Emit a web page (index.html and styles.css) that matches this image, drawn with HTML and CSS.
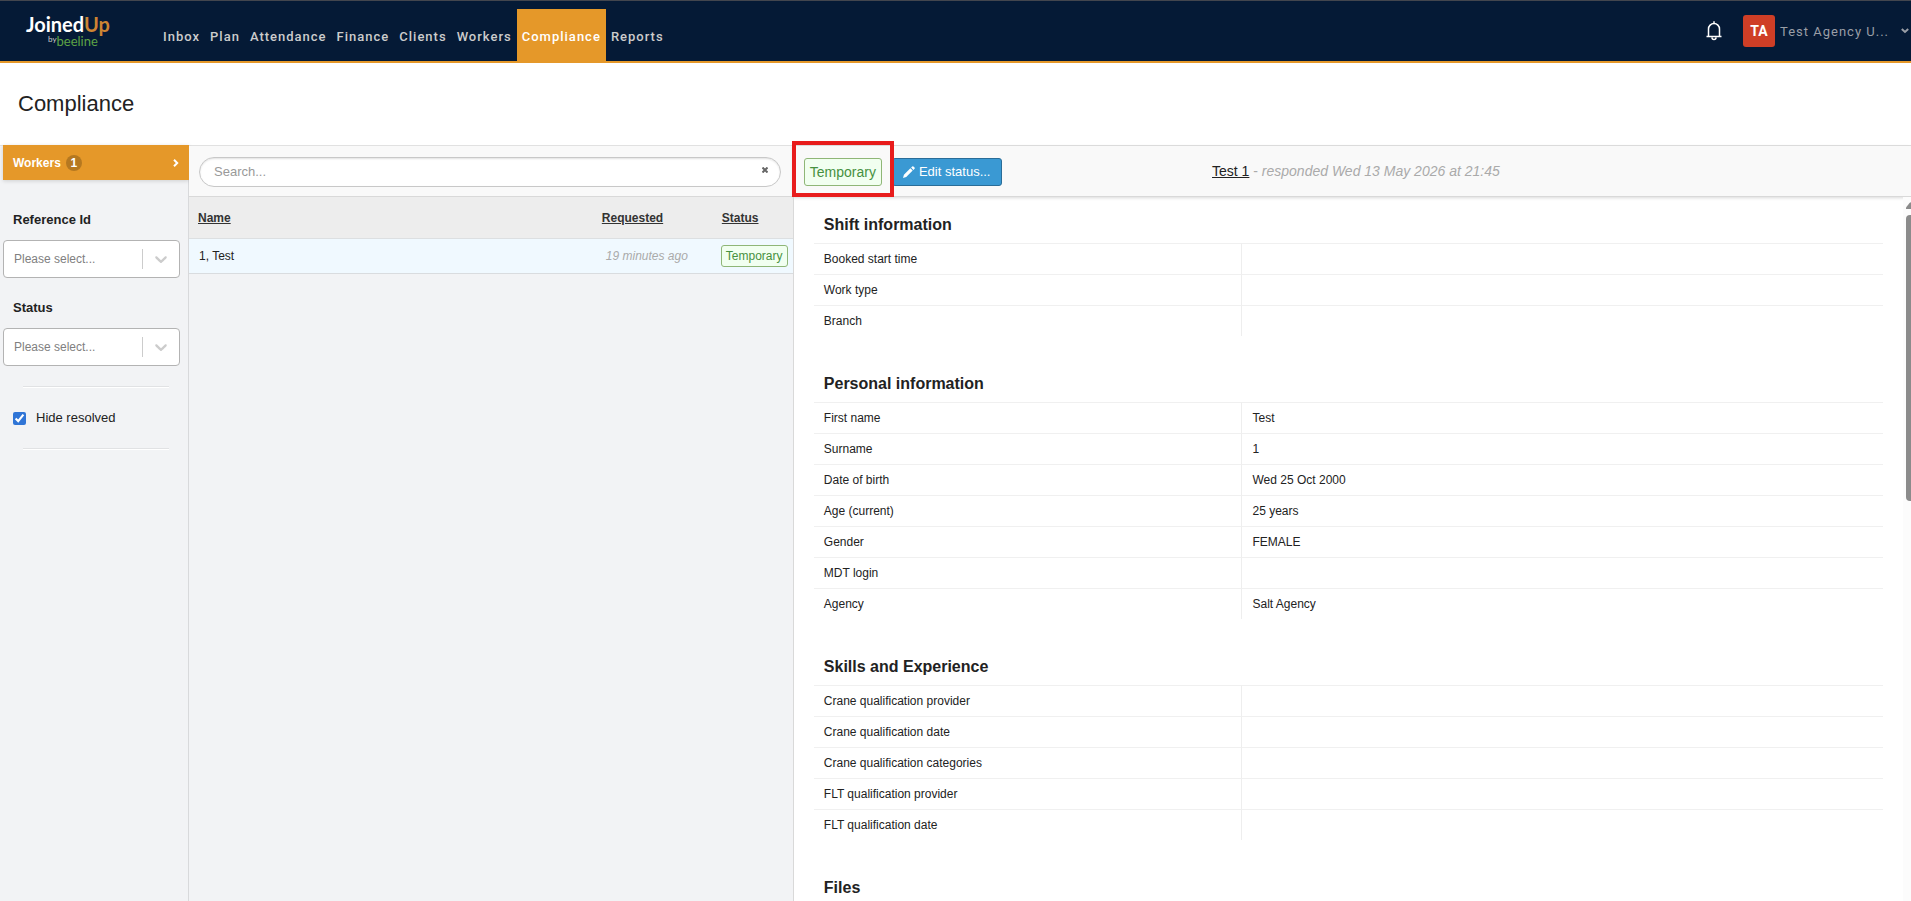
FILE: index.html
```html
<!DOCTYPE html>
<html lang="en">
<head>
    <meta charset="UTF-8">
    <meta name="viewport" content="width=device-width, initial-scale=1.0">
    <title>Compliance</title>
    <link rel="stylesheet" href="styles.css">
</head>
<body>

    <header class="top-bar">
        <a class="logo" href="#">
            <span class="logo-name">Joined<span class="logo-up">Up</span></span>
            <span class="logo-sub"><span class="logo-by">by</span><span class="logo-beeline">beeline</span></span>
        </a>
        <nav class="main-nav">
            <a href="#">Inbox</a>
            <a href="#">Plan</a>
            <a href="#">Attendance</a>
            <a href="#">Finance</a>
            <a href="#">Clients</a>
            <a href="#">Workers</a>
            <a href="#" class="active">Compliance</a>
            <a href="#">Reports</a>
        </nav>
        <div class="user-area">
            <button class="bell-button" aria-label="Notifications">
                <svg width="16" height="20" viewBox="0 0 16 20" fill="none" stroke="#fff" stroke-width="1.5">
                    <path d="M.5 15.5h15M2.5 15.5V8a5.5 5.5 0 0 1 11 0v7.500M8 2.500V.2M6 16.500a2 2 0 0 0 4 0"/>
                </svg>
            </button>
            <button class="user-menu">
                <span class="avatar">TA</span>
                <span class="user-name">Test Agency U...</span>
                <svg width="8" height="6" viewBox="0 0 8 6" fill="none" stroke="#9a9ea6" stroke-width="2"><path d="M.8 1l3.200 3L7.200 1"/></svg>
            </button>
        </div>
    </header>

    <h1 class="page-title">Compliance</h1>

    <main class="workspace">
        <aside class="sidebar">
            <a class="side-tab" href="#">
                Workers <span class="count">1</span>
                <svg class="side-arrow" width="6" height="8" viewBox="0 0 6 8" fill="none" stroke="#fff" stroke-width="2"><path d="M1 .8l3.200 3.200L1 7.200"/></svg>
            </a>

            <label class="filter-label" for="reference-id">Reference Id</label>
            <div class="select-box">
                <select id="reference-id"><option>Please select...</option></select>
                <svg width="20" height="20" viewBox="0 0 20 20" fill="#ccc"><path d="M4.516 7.548c.436-.446 1.043-.481 1.576 0L10 11.295l3.908-3.747c.533-.481 1.141-.446 1.574 0 .436.445.408 1.197 0 1.615-.406.418-4.695 4.502-4.695 4.502a1.095 1.095 0 0 1-1.576 0S4.924 9.581 4.516 9.163s-.436-1.170 0-1.615z"/></svg>
            </div>

            <label class="filter-label" for="status">Status</label>
            <div class="select-box">
                <select id="status"><option>Please select...</option></select>
                <svg width="20" height="20" viewBox="0 0 20 20" fill="#ccc"><path d="M4.516 7.548c.436-.446 1.043-.481 1.576 0L10 11.295l3.908-3.747c.533-.481 1.141-.446 1.574 0 .436.445.408 1.197 0 1.615-.406.418-4.695 4.502-4.695 4.502a1.095 1.095 0 0 1-1.576 0S4.924 9.581 4.516 9.163s-.436-1.170 0-1.615z"/></svg>
            </div>

            <hr>
            <label class="check-label"><input type="checkbox" checked> Hide resolved</label>
            <hr>
        </aside>

        <section class="list-panel">
            <div class="toolbar search-bar">
                <input class="search" type="text" placeholder="Search..." aria-label="Search">
                <button class="clear" aria-label="Clear search">
                    <svg width="6" height="6" viewBox="0 0 6 6" stroke="#666" stroke-width="2"><path d="M.5.5l5 5M5.500.5l-5 5"/></svg>
                </button>
            </div>
            <table class="worker-list">
                <thead>
                    <tr>
                        <th><a href="#">Name</a></th>
                        <th class="col-requested"><a href="#">Requested</a></th>
                        <th class="col-status"><a href="#">Status</a></th>
                    </tr>
                </thead>
                <tbody>
                    <tr>
                        <td>1, Test</td>
                        <td class="when">19 minutes ago</td>
                        <td class="status-cell"><span class="badge">Temporary</span></td>
                    </tr>
                </tbody>
            </table>
        </section>

        <section class="detail-panel">
            <div class="toolbar detail-bar">
                <div class="status-actions">
                    <div class="highlight"><span class="badge badge-large">Temporary</span></div>
                    <button class="edit-button">
                        <svg width="12" height="12" viewBox="0 0 13 13" fill="#fff"><path d="M0 13l1-3.500 7-7L10.500 5l-7 7zM8.800 1.700L10 .5a1 1 0 0 1 1.300 0l1.200 1.200a1 1 0 0 1 0 1.300l-1.200 1.200z"/></svg>
                        Edit status...
                    </button>
                </div>
                <div class="response"><a href="#">Test 1</a> - <em>responded Wed 13 May 2026 at 21:45</em></div>
            </div>

            <div class="details">
                <h2>Shift information</h2>
                <table class="info">
                    <tr><th>Booked start time</th><td></td></tr>
                    <tr><th>Work type</th><td></td></tr>
                    <tr><th>Branch</th><td></td></tr>
                </table>

                <h2>Personal information</h2>
                <table class="info">
                    <tr><th>First name</th><td>Test</td></tr>
                    <tr><th>Surname</th><td>1</td></tr>
                    <tr><th>Date of birth</th><td>Wed 25 Oct 2000</td></tr>
                    <tr><th>Age (current)</th><td>25 years</td></tr>
                    <tr><th>Gender</th><td>FEMALE</td></tr>
                    <tr><th>MDT login</th><td></td></tr>
                    <tr><th>Agency</th><td>Salt Agency</td></tr>
                </table>

                <h2>Skills and Experience</h2>
                <table class="info">
                    <tr><th>Crane qualification provider</th><td></td></tr>
                    <tr><th>Crane qualification date</th><td></td></tr>
                    <tr><th>Crane qualification categories</th><td></td></tr>
                    <tr><th>FLT qualification provider</th><td></td></tr>
                    <tr><th>FLT qualification date</th><td></td></tr>
                </table>

                <h2>Files</h2>
            </div>

            <!-- Scrollbar runs off the right edge of the panel -->
            <div class="scroll-track">
                <svg width="10" height="7" viewBox="0 0 10 7" fill="#8b8b8b"><path d="M0 7V5.500L3.500 1Q5-.5 6.500 1L10 5.500V7z"/></svg>
                <div class="scroll-thumb"></div>
            </div>
        </section>
    </main>

</body>
</html>
```
FILE: styles.css
```css
* {
    box-sizing: border-box;
}

body {
    margin: 0;
    height: 100vh;
    overflow: hidden;
    display: flex;
    flex-direction: column;
    font-family: Arial, "Liberation Sans", sans-serif;
    font-size: 12px;
    color: #222;
    background-color: #fff;
}

button,
input,
select {
    font-family: inherit;
    margin: 0;
}

button {
    cursor: pointer;
}

/* Top bar */
.top-bar {
    display: flex;
    flex: none;
    height: 63px;
    font-family: Roboto, Arial, sans-serif;
    background-color: #051a36;
    border-top: 1px solid #43464e;
    border-bottom: 2px solid #e59829;
}

.logo {
    display: flex;
    flex-direction: column;
    width: 158px;
    padding: 12px 0 0 26px;
    font-family: Lato, sans-serif;
    text-decoration: none;
}

.logo-name {
    font-size: 20px;
    font-weight: bold;
    line-height: 22px;
    color: #fff;
}

.logo-up {
    color: #cd8433;
}

.logo-sub {
    display: flex;
    padding-left: 22px;
    line-height: 12px;
}

.logo-by {
    font-size: 8px;
    line-height: 8px;
    color: #ccc;
}

.logo-beeline {
    font-size: 13px;
    color: #5da345;
}

.main-nav {
    display: flex;
    padding-top: 8px;
}

.main-nav a {
    padding: 19px 5px 15px;
    font-size: 13px;
    font-weight: 500;
    line-height: 18px;
    letter-spacing: 1px;
    color: #ccc;
    text-decoration: none;
}

.main-nav a.active {
    color: #fff;
    background-color: #e59829;
}

.user-area {
    display: flex;
    align-items: center;
    margin-left: auto;
    padding-right: 2px;
}

.bell-button,
.user-menu,
.clear {
    display: flex;
    align-items: center;
    padding: 0;
    border: none;
    background: none;
}

.bell-button {
    margin-right: 21px;
}

.user-menu {
    font-size: 13px;
    letter-spacing: 1px;
    color: #9a9ea6;
}

.avatar {
    width: 32px;
    margin-right: 5px;
    border-radius: 3px;
    font-size: 14px;
    font-weight: bold;
    line-height: 32px;
    letter-spacing: 0;
    color: #fff;
    background-color: #cf3e26;
}

.user-name {
    margin-right: 12px;
}

.page-title {
    flex: none;
    margin: 0;
    padding: 27px 18px;
    font-size: 22px;
    font-weight: normal;
    line-height: 28px;
}

/* Three columns: filters, list, details */
.workspace {
    display: grid;
    grid-template-columns: 189px 27fr 50fr;
    flex: 1;
    min-height: 0;
    border-top: 1px solid #e1e1e1;
}

.sidebar {
    padding-left: 3px;
    border-right: 1px solid #d8d9db;
    background-color: #f2f3f5;
}

.side-tab {
    display: flex;
    align-items: center;
    height: 35px;
    margin: -1px -1px 10px 0;
    padding: 0 10px;
    font-weight: bold;
    color: #fff;
    background-color: #e59829;
    box-shadow: 0 1px 4px rgba(0, 0, 0, 0.15);
    text-decoration: none;
}

.count {
    width: 16px;
    margin-left: 5px;
    border-radius: 8px;
    line-height: 16px;
    text-align: center;
    background-color: #b57820;
}

.side-arrow {
    margin-left: auto;
}

.filter-label {
    display: block;
    padding: 21px 10px 11px;
    font-size: 13px;
    font-weight: bold;
    line-height: 18px;
}

.select-box {
    position: relative;
    margin-right: 8px;
}

.select-box select {
    display: block;
    width: 100%;
    height: 38px;
    padding: 0 40px 0 10px;
    border: 1px solid #b3b3b3;
    border-radius: 4px;
    font-size: 12px;
    color: #808080;
    background-color: #fff;
    appearance: none;
}

.select-box::after {
    content: "";
    position: absolute; /* Divider over the select */
    top: 9px;
    right: 37px;
    width: 1px;
    height: 20px;
    background-color: #ccc;
}

.select-box svg {
    position: absolute;
    top: 9px;
    right: 9px;
    pointer-events: none;
}

.sidebar hr {
    height: 2px;
    margin: 20px 19px 20px 20px;
    border: none;
    border-top: 1px solid #e1e2e4;
    border-bottom: 1px solid #fff;
}

.check-label {
    display: flex;
    align-items: center;
    padding: 0 10px;
    font-size: 13px;
    line-height: 20px;
}

.check-label input {
    width: 13px;
    height: 13px;
    margin-right: 10px;
    accent-color: #3075d6;
}

/* Toolbars */
.toolbar {
    height: 51px;
    border-bottom: 1px solid #d9d9d9;
    background-color: #f9f9f9;
}

.search-bar {
    position: relative;
    padding: 11px 12px 9px 10px;
}

.search {
    width: 100%;
    height: 30px;
    padding: 0 32px 2px 14px;
    border: 1px solid #c8c8c8;
    border-radius: 15px;
    font-size: 13px;
    background-color: #fff;
    box-shadow: inset 0 1px 2px rgba(0, 0, 0, 0.12);
}

.search::placeholder {
    color: #999;
}

.clear {
    position: absolute; /* Sits inside the search box */
    top: 21px;
    right: 25px;
}

/* Worker list */
.list-panel {
    background-color: #f2f3f5;
}

.worker-list {
    width: 100%;
    table-layout: fixed;
    border-spacing: 0;
}

.worker-list th {
    height: 42px;
    padding: 0 0 0 9px;
    text-align: left;
    background-color: #ededed;
    border-bottom: 1px solid #dcdfe1;
}

.worker-list th a {
    color: #333;
}

.worker-list td {
    height: 35px;
    padding: 0 0 0 10px;
    background-color: #f0f9ff;
    border-bottom: 1px solid #d9dcdf;
}

.worker-list .col-requested {
    width: 120px;
}

.worker-list .col-status {
    width: 80px;
}

.worker-list .when {
    padding-left: 13px;
    font-style: italic;
    color: #aaa;
}

.worker-list .status-cell {
    padding-left: 8px;
}

.badge {
    display: inline-block;
    padding: 0 4px;
    border: 1px solid #8fb677;
    border-radius: 3px;
    line-height: 20px;
    color: #46913f;
    background-color: #f1fff0;
}

.badge-large {
    display: block;
    padding: 0 5px;
    font-size: 14px;
    line-height: 26px;
}

/* Details */
.detail-panel {
    position: relative;
    min-width: 0;
    min-height: 0;
    background-color: #fff;
}

.detail-bar {
    display: grid;
    grid-template-columns: 1fr auto 1fr;
    align-items: center;
    padding: 0 3px 0 11px;
    box-shadow: 0 1px 3px rgba(0, 0, 0, 0.15);
}

.status-actions {
    display: flex;
    gap: 10px;
    padding-top: 1px;
}

.highlight {
    position: relative;
}

.highlight::after {
    content: "";
    position: absolute; /* Red frame around the current status */
    inset: -17px -12px -11px;
    z-index: 1;
    border: 4px solid #e81c1c;
    pointer-events: none;
}

.edit-button {
    display: flex;
    align-items: center;
    gap: 4px;
    height: 28px;
    padding: 0 10px;
    border: 1px solid #2a6d98;
    border-radius: 3px;
    font-size: 13px;
    color: #fff;
    background-color: #3a99d3;
}

.response {
    font-size: 14px;
    color: #aaa;
}

.response a {
    color: #222;
}

.details {
    height: calc(100% - 51px);
    overflow: hidden;
    padding: 0 28px 0 20px;
    border-left: 1px solid #d9d9d9;
}

.details h2 {
    margin: 0;
    padding: 18px 10px 8px;
    font-size: 16px;
    line-height: 20px;
}

.info {
    width: 100%;
    margin-bottom: 20px;
    table-layout: fixed;
    border-spacing: 0;
}

.info th,
.info td {
    height: 31px;
    padding: 0 10px;
    border-top: 1px solid #f0f0f0;
    font-weight: normal;
    text-align: left;
}

.info th {
    width: 40%;
}

.info td {
    border-left: 1px solid #eee;
}

.scroll-track {
    position: absolute; /* Over the right edge of the details */
    top: 51px;
    right: 0;
    bottom: 0;
    width: 8px;
    padding: 5px 0 0 3px;
    overflow: hidden;
    background-color: #fcfcfc;
}

.scroll-track svg {
    display: block;
}

.scroll-thumb {
    width: 10px;
    height: 286px;
    margin-top: 6px;
    border-radius: 4px;
    background-color: #8b8b8b;
}
```
